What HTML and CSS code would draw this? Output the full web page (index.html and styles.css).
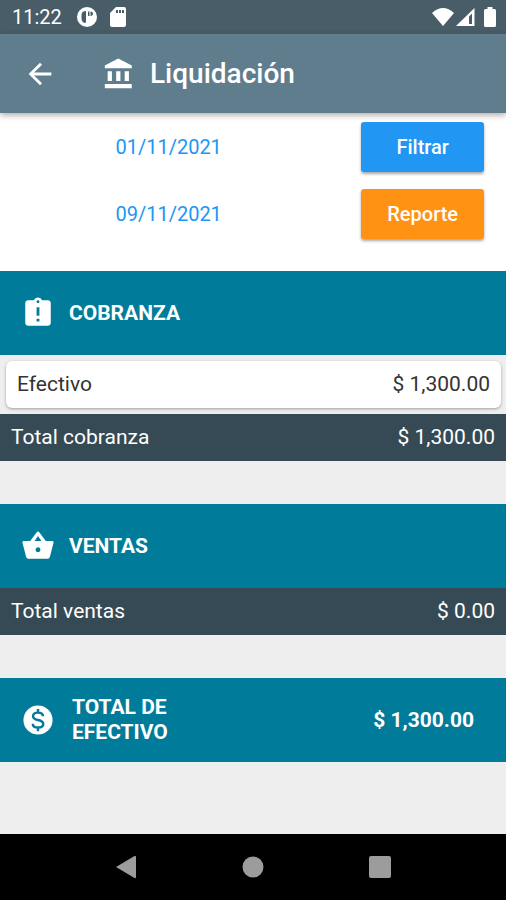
FILE: index.html
```html
<!DOCTYPE html>
<html lang="es">
<head>
<meta charset="utf-8">
<meta name="viewport" content="width=device-width, initial-scale=1">
<title>Liquidación</title>
<link rel="stylesheet" href="styles.css">
</head>
<body>
<div class="status">
  <span class="clock">11:22</span>
  <svg class="status-app" viewBox="0 0 20 20" aria-hidden="true"><circle cx="10" cy="10" r="10" fill="#fff"/><path d="M9 4v10.500Q9 16 7.500 16 4.500 15 4.500 11V8Q4.500 4 9 4zM11 4.500h1.500V9H11zM13.500 4.500q2.500 0 2.500 2.300t-2.500 2.300z" fill="#485d67"/></svg>
  <svg class="status-card" viewBox="0 0 16 20" aria-hidden="true"><path d="M6 0h8q2 0 2 2v16q0 2-2 2H2q-2 0-2-2V6z" fill="#fff"/><path d="M6 3h2v3H6zM9 3h2v3H9zM12 3h2v3h-2z" fill="#485d67"/></svg>
  <span class="status-right">
    <svg class="wifi" viewBox="0 0 22 20" aria-hidden="true"><path d="M0 6Q11-4 22 6L11 19z" fill="#fff"/></svg>
    <svg class="signal" viewBox="0 0 19 20" aria-hidden="true"><path d="M0 19L18.500 1v18z" fill="#fff"/><path d="M13 9.500L16 6.500V17h-3z" fill="#485d67"/></svg>
    <svg class="battery" viewBox="0 0 12 20" aria-hidden="true"><path d="M3.500 0h5v2h2Q12 2 12 3.500v15q0 1.500-1.500 1.500h-9Q0 20 0 18.500v-15Q0 2 1.500 2h2z" fill="#fff"/></svg>
  </span>
</div>
<header class="appbar">
  <button class="back" type="button" aria-label="Volver"><svg class="icon" viewBox="0 0 24 24"><path d="M20 11H7.830l5.590-5.590L12 4l-8 8 8 8 1.410-1.410L7.830 13H20v-2z"/></svg></button>
  <svg class="icon" viewBox="0 0 24 24" aria-hidden="true"><path d="M4 10v7h3v-7H4zm6 0v7h3v-7h-3zM2 22h19v-3H2v3zm14-12v7h3v-7h-3zm-4.500-9L2 6v2h19V6l-9.500-5z"/></svg>
  <h1 class="title">Liquidación</h1>
</header>
<main class="content">
  <section class="filters">
    <button class="date" type="button">01/11/2021</button>
    <button class="action filter" type="button">Filtrar</button>
    <button class="date" type="button">09/11/2021</button>
    <button class="action report" type="button">Reporte</button>
  </section>
  <section class="group">
    <h2 class="band">
      <svg class="icon" viewBox="0 0 24 24" aria-hidden="true"><path d="M19 3h-4.180C14.400 1.840 13.300 1 12 1s-2.400.84-2.820 2H5c-1.100 0-2 .9-2 2v14c0 1.100.9 2 2 2h14c1.100 0 2-.9 2-2V5c0-1.100-.9-2-2-2zm-6 15h-2v-2h2v2zm0-4h-2V8h2v6zm-1-9c-.55 0-1-.45-1-1s.45-1 1-1 1 .45 1 1-.45 1-1 1z"/></svg>
      <span>COBRANZA</span>
    </h2>
    <div class="card"><span>Efectivo</span><span>$ 1,300.00</span></div>
    <div class="total"><span>Total cobranza</span><span>$ 1,300.00</span></div>
  </section>
  <section class="group">
    <h2 class="band">
      <svg class="icon" viewBox="0 0 24 24" aria-hidden="true"><path d="M17.500 8.500L12.900 2.300c-.4-.6-1.400-.6-1.800 0L6.500 8.500H2c-.55 0-1 .45-1 1 0 .1 0 .2.040.27l2.540 9.770c.23.84 1 1.460 1.920 1.460h13c.92 0 1.690-.62 1.930-1.460l2.540-9.770L23 9.500c0-.55-.45-1-1-1h-4.500zM9.600 8.500l2.400-3.600 2.400 3.600H9.600zm2.400 7.800c-1 0-1.700-.8-1.700-1.700s.7-1.700 1.700-1.700 1.700.8 1.700 1.700-.7 1.700-1.700 1.700z"/></svg>
      <span>VENTAS</span>
    </h2>
    <div class="total"><span>Total ventas</span><span>$ 0.00</span></div>
  </section>
  <section class="band grand">
    <svg class="icon" viewBox="0 0 24 24" aria-hidden="true"><circle cx="12" cy="12" r="10.300"/><path class="coin-mark" d="M12 4.200v3M12 17v3M15.500 9.400c0-1.500-1.400-2.600-3.500-2.600s-3.500 1-3.500 2.500c0 1.600 1.400 2.200 3.500 2.700s3.700 1.200 3.700 2.800c0 1.500-1.500 2.500-3.700 2.500s-3.700-1-3.700-2.700"/></svg>
    <h2 class="grand-label">TOTAL DE EFECTIVO</h2>
    <span class="grand-value">$ 1,300.00</span>
  </section>
</main>
<nav class="navbar">
  <button type="button" aria-label="Atrás"><svg viewBox="0 0 24 24"><path d="M2 12L20.500 1Q22 .5 22 2v20q0 1.500-1.500 1z"/></svg></button>
  <button type="button" aria-label="Inicio"><svg viewBox="0 0 24 24"><circle cx="12" cy="12" r="10.500"/></svg></button>
  <button type="button" aria-label="Recientes"><svg viewBox="0 0 24 24"><rect x="1" y="1" width="22" height="22" rx="2"/></svg></button>
</nav>
</body>
</html>
```
FILE: styles.css
```css
* { box-sizing: border-box; }

body {
  margin: 0;
  min-height: 100vh;
  display: flex;
  flex-direction: column;
  background: #eee;
  font-family: Roboto, "Liberation Sans", sans-serif;
  font-size: 21px;
  line-height: 25px;
  color: #fff;
}

button {
  margin: 0;
  padding: 0;
  border: 0;
  background: none;
  color: inherit;
  font: inherit;
  cursor: pointer;
}

h1, h2 { margin: 0; }

svg { display: block; flex: none; }

.icon {
  width: 34px;
  height: 34px;
  fill: #fff;
}

.coin-mark {
  fill: none;
  stroke: #007c9a;
  stroke-width: 1.7;
}

.status {
  height: 34px;
  padding: 0 10px 0 12px;
  display: flex;
  align-items: center;
  background: #485d67;
  font-size: 20px;
}

.clock { margin-right: 15px; }
.status-app { width: 20px; height: 20px; margin-right: 13px; }
.status-card { width: 16px; height: 20px; }
.status-right { margin-left: auto; display: flex; align-items: center; }
.wifi { width: 22px; height: 20px; margin-right: 2px; }
.signal { width: 19px; height: 20px; margin-right: 9px; }
.battery { width: 12px; height: 20px; }

.appbar {
  position: relative;
  height: 79px;
  padding: 0 23px;
  display: flex;
  align-items: center;
  background: #607d8e;
  box-shadow: 0 2px 6px rgba(60, 30, 20, .4);
}

.back { margin-right: 45px; }

.title {
  margin-left: 14px;
  font-size: 28px;
  line-height: 34px;
  font-weight: 500;
}

.content { flex: 1; }

.filters {
  padding: 9px 0 32px;
  display: grid;
  grid-template-columns: 2fr 1fr;
  row-gap: 17px;
  background: #fff;
}

.date {
  color: #2196f3;
  font-size: 20px;
}

.action {
  height: 50px;
  margin: 0 22px 0 24px;
  border-radius: 3px;
  font-size: 20px;
  font-weight: 500;
  box-shadow: 0 2px 3px rgba(0, 0, 0, .35);
}

.filter { background: #2196f3; }
.report { background: #ff9212; }

.group { margin-bottom: 43px; }

.band {
  min-height: 84px;
  padding: 0 32px 0 21px;
  display: flex;
  align-items: center;
  gap: 14px;
  background: #007c9a;
  font-size: 21px;
  font-weight: 700;
}

.card {
  height: 47px;
  margin: 6px 5px 6px 6px;
  padding: 0 11px;
  display: flex;
  align-items: center;
  justify-content: space-between;
  border-radius: 6px;
  background: #fff;
  color: #333;
  box-shadow: 0 1px 3px rgba(0, 0, 0, .35);
}

.total {
  height: 47px;
  padding: 0 11px;
  display: flex;
  align-items: center;
  justify-content: space-between;
  background: #364a55;
}

.grand { gap: 17px; }

.grand-label {
  width: 120px;
  font-size: 21px;
}

.grand-value { margin-left: auto; }

.navbar {
  height: 66px;
  padding: 0 63px;
  display: flex;
  align-items: center;
  background: #000;
}

.navbar button {
  flex: 1;
  display: flex;
  justify-content: center;
}

.navbar svg {
  width: 24px;
  height: 24px;
  fill: #9c9c9c;
}
```
